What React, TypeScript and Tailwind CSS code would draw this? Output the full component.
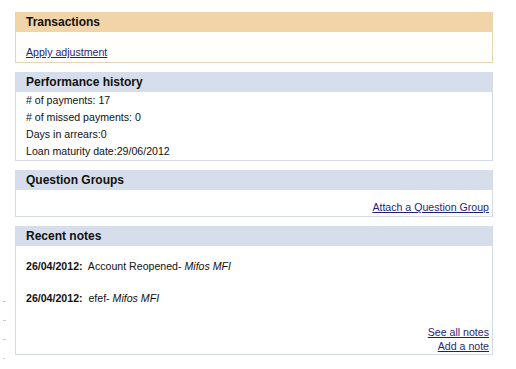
const linkCls = "text-[#1f1f7a] underline";

const Header = ({ title, tone }: { title: string; tone: "tan" | "blue" }) => (
  <div
    className={`h-5 pl-[10px] text-[12px] font-bold leading-5 text-[#111] ${
      tone === "tan" ? "bg-[#f1d4a7]" : "bg-[#d6deeb]"
    }`}
  >
    {title}
  </div>
);

const App = () => {
  return (
    <div className="flex h-[369px] w-[516px] bg-white font-['Liberation_Sans',Arial,sans-serif] text-[10.6px] text-[#111]">
      <div className="flex w-[15px] flex-col items-start gap-[18px] pl-[3px] pt-[301px]">
        <span className="block h-px w-[3px] bg-[#c8c8c8]" />
        <span className="block h-px w-[3px] bg-[#c8c8c8]" />
        <span className="block h-px w-[3px] bg-[#c8c8c8]" />
        <span className="block h-px w-[3px] bg-[#d8d8d8]" />
      </div>
      <div className="flex w-[478px] flex-col gap-[9px] pt-3">
        {/* Transactions */}
        <div className="border border-t-0 border-[#e6d4b4] bg-[#fffefa]">
          <Header title="Transactions" tone="tan" />
          <div className="pl-[10px] pt-[12px] pb-px leading-[17px]">
            <a href="#" className={linkCls}>
              Apply adjustment
            </a>
          </div>
        </div>

        {/* Performance history */}
        <div className="border border-t-0 border-[#d5dae4]">
          <Header title="Performance history" tone="blue" />
          <div className="pl-[10px] leading-[17px]">
            <div># of payments: 17</div>
            <div># of missed payments: 0</div>
            <div>Days in arrears:0</div>
            <div>Loan maturity date:29/06/2012</div>
          </div>
        </div>

        {/* Question Groups */}
        <div className="border border-t-0 border-[#d5dae4]">
          <Header title="Question Groups" tone="blue" />
          <div className="pr-[3px] pt-[9px] text-right leading-[17px]">
            <a href="#" className={linkCls}>
              Attach a Question Group
            </a>
          </div>
        </div>

        {/* Recent notes */}
        <div className="border border-t-0 border-[#d5dae4]">
          <Header title="Recent notes" tone="blue" />
          <div className="flex flex-col gap-[15px] pl-[10px] pt-[12px] leading-[17px]">
            <p>
              <b>26/04/2012:</b>&nbsp; Account Reopened- <i>Mifos MFI</i>
            </p>
            <p>
              <b>26/04/2012:</b>&nbsp; efef- <i>Mifos MFI</i>
            </p>
          </div>
          <div className="flex flex-col items-end pr-[3px] pt-[18px] pb-px leading-[14px]">
            <a href="#" className={linkCls}>
              See all notes
            </a>
            <a href="#" className={linkCls}>
              Add a note
            </a>
          </div>
        </div>
      </div>
    </div>
  );
};

export default App;
